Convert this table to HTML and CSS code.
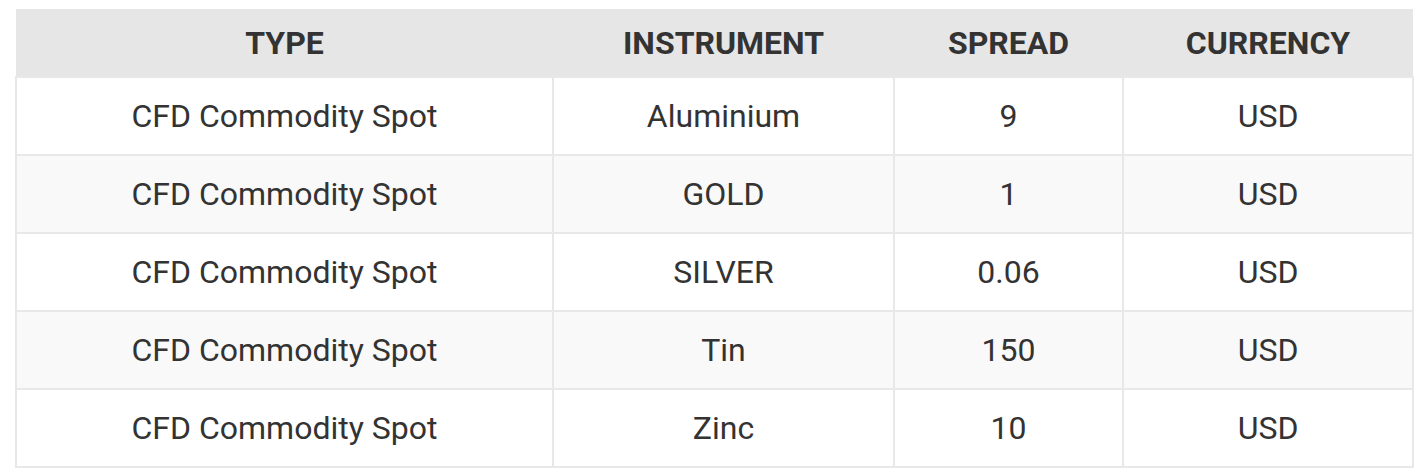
FILE: index.html
```html
<!DOCTYPE html>
<html>
<head>
<meta charset="utf-8">
<link rel="stylesheet" href="styles.css">
</head>
<body>
<table class="spreads">
  <colgroup>
    <col class="c-type">
    <col class="c-inst">
    <col class="c-spread">
    <col class="c-cur">
  </colgroup>
  <thead>
    <tr><th>TYPE</th><th>INSTRUMENT</th><th>SPREAD</th><th>CURRENCY</th></tr>
  </thead>
  <tbody>
    <tr><td>CFD Commodity Spot</td><td>Aluminium</td><td>9</td><td>USD</td></tr>
    <tr><td>CFD Commodity Spot</td><td>GOLD</td><td>1</td><td>USD</td></tr>
    <tr><td>CFD Commodity Spot</td><td>SILVER</td><td>0.06</td><td>USD</td></tr>
    <tr><td>CFD Commodity Spot</td><td>Tin</td><td>150</td><td>USD</td></tr>
    <tr><td>CFD Commodity Spot</td><td>Zinc</td><td>10</td><td>USD</td></tr>
  </tbody>
</table>
</body>
</html>
```
FILE: styles.css
```css
html, body {
  margin: 0;
  padding: 0;
  background: #ffffff;
}
body {
  padding: 9px 0 0 15px;
  font-family: Roboto, "Liberation Sans", sans-serif;
  color: #333333;
}
.spreads {
  border-collapse: collapse;
  table-layout: fixed;
  width: 1397px;
}
.c-type { width: 537px; }
.c-inst { width: 341px; }
.c-spread { width: 229px; }
.c-cur { width: 290px; }
.spreads th {
  background: #e6e6e6;
  height: 67px;
  padding: 0;
  font-size: 32px;
  font-weight: 700;
  text-align: center;
  color: #333333;
  border: none;
}
.spreads td {
  height: 76px;
  padding: 0;
  font-size: 32px;
  text-align: center;
  border: 2px solid #e8e8e8;
  color: #333333;
}
.spreads tbody tr:nth-child(even) td {
  background: #f9f9f9;
}
```
